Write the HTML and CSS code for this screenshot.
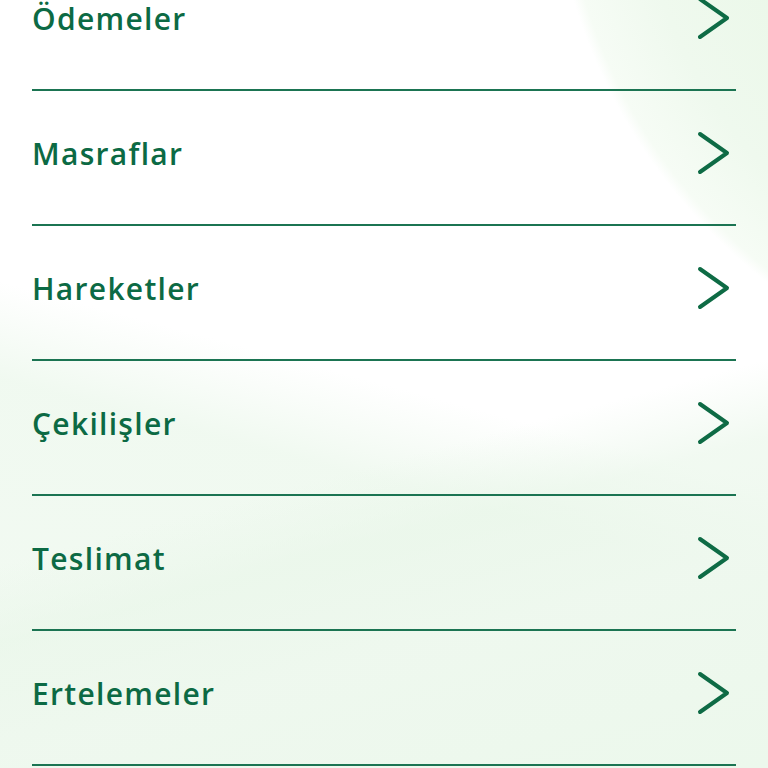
FILE: index.html
```html
<!DOCTYPE html>
<html lang="tr">
<head>
<meta charset="utf-8">
<title>Menü</title>
<link rel="stylesheet" href="styles.css">
</head>
<body>
<main class="screen">
  <ul class="menu">
    <li class="item"><span class="label">Ödemeler</span><svg class="chev" viewBox="0 0 34 46"><polyline points="4,3 31,22 4,41"/></svg></li>
    <li class="item"><span class="label">Masraflar</span><svg class="chev" viewBox="0 0 34 46"><polyline points="4,3 31,22 4,41"/></svg></li>
    <li class="item"><span class="label">Hareketler</span><svg class="chev" viewBox="0 0 34 46"><polyline points="4,3 31,22 4,41"/></svg></li>
    <li class="item"><span class="label">Çekilişler</span><svg class="chev" viewBox="0 0 34 46"><polyline points="4,3 31,22 4,41"/></svg></li>
    <li class="item"><span class="label">Teslimat</span><svg class="chev" viewBox="0 0 34 46"><polyline points="4,3 31,22 4,41"/></svg></li>
    <li class="item"><span class="label">Ertelemeler</span><svg class="chev" viewBox="0 0 34 46"><polyline points="4,3 31,22 4,41"/></svg></li>
  </ul>
</main>
</body>
</html>
```
FILE: styles.css
```css
html, body {
  margin: 0;
  padding: 0;
}
body {
  width: 768px;
  height: 768px;
  overflow: hidden;
  font-family: "Open Sans", "Noto Sans", sans-serif;
  background-color: #ffffff;
  background-image:
    radial-gradient(ellipse 560px 560px at 1110px -160px, rgba(236,248,236,0) 0, rgba(236,248,236,0) 58%, #f3fbf2 60%, #ebf8e9 64%, #eff9ee 85%, #f6fcf5 98%, rgba(255,255,255,0) 100%),
    linear-gradient(165deg, rgba(255,255,255,0) 0, rgba(255,255,255,0) 58%, rgba(232,246,232,0.6) 66%, rgba(238,248,238,0.9) 78%, #ecf8ec 100%),
    linear-gradient(195deg, rgba(255,255,255,0) 0, rgba(255,255,255,0) 50%, rgba(234,247,234,0.7) 60%, rgba(240,249,240,0.85) 100%);
}
.screen {
  width: 768px;
  height: 768px;
}
.menu {
  list-style: none;
  margin: -44px 0 0 0;
  padding: 0 32px;
}
.item {
  height: 133px;
  box-sizing: content-box;
  border-bottom: 2px solid #1b7452;
  display: flex;
  align-items: center;
  justify-content: space-between;
}
.label {
  font-size: 30px;
  font-weight: 600;
  color: #0c6a44;
  letter-spacing: 1.3px;
  margin-top: -8px;
}
.chev {
  width: 34px;
  height: 46px;
  margin-right: 6px;
  margin-top: -8px;
  fill: none;
  stroke: #0e6b45;
  stroke-width: 4;
  stroke-linecap: round;
  stroke-linejoin: round;
}
```
